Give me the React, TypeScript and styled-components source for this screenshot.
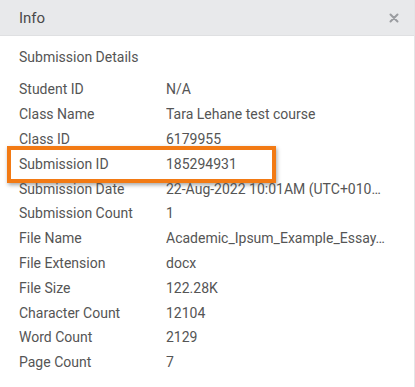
import styled, { createGlobalStyle } from 'styled-components';

const GlobalStyle = createGlobalStyle`
  html, body {
    margin: 0;
    padding: 0;
    background: #ffffff;
  }
  body {
    font-family: Roboto, "Noto Sans", Arial, sans-serif;
  }
`;

const HIGHLIGHT = '#f27a14';

const details: [string, string][] = [
    ['Student ID', 'N/A'],
    ['Class Name', 'Tara Lehane test course'],
    ['Class ID', '6179955'],
    ['Submission ID', '185294931'],
    ['Submission Date', '22-Aug-2022 10:01AM (UTC+0100) Dublin, Edinburgh, Lisbon, London'],
    ['Submission Count', '1'],
    ['File Name', 'Academic_Ipsum_Example_Essay.docx'],
    ['File Extension', 'docx'],
    ['File Size', '122.28K'],
    ['Character Count', '12104'],
    ['Word Count', '2129'],
    ['Page Count', '7'],
];

const Panel = styled.div`
    width: 415px;
    height: 387px;
    background: #fff;
    box-sizing: border-box;
    border-right: 1px solid #e4e5e7;
    overflow: hidden;
`;

const Header = styled.div`
    height: 36px;
    background: #e8e9eb;
    border-bottom: 1px solid #dfe0e2;
    box-sizing: border-box;
    display: flex;
    align-items: center;
    justify-content: space-between;
    padding: 0 19px;
`;

const Title = styled.span`
    color: #4a4a4a;
    font-size: 15px;
`;

const Close = styled.button`
    border: none;
    background: transparent;
    padding: 0;
    margin-right: -4px;
    display: flex;
    align-items: center;
    cursor: pointer;
`;

const Body = styled.div`
    padding: 11px 19px 0;
`;

const Section = styled.div`
    color: #555;
    font-size: 14px;
    line-height: 20px;
    margin-bottom: 10px;
`;

const List = styled.div`
    display: flex;
    flex-direction: column;
`;

const Row = styled.div`
    position: relative;
    display: grid;
    grid-template-columns: 147px 221px;
    height: 24.8px;
    align-items: center;
    font-size: 14px;
    color: #555;
`;

const Label = styled.span`
    white-space: nowrap;
    position: relative;
    z-index: 1;
`;

const Value = styled.span`
    white-space: nowrap;
    overflow: hidden;
    text-overflow: ellipsis;
    position: relative;
    z-index: 1;
`;

const Highlight = styled.div`
    position: absolute;
    left: -12px;
    top: -5px;
    width: 261px;
    height: 29px;
    border: 4px solid ${HIGHLIGHT};
    box-shadow: 1px 2px 4px rgba(0, 0, 0, 0.35);
    background: #fff;
`;

export default function App() {
    return (
        <>
            <GlobalStyle />
            <Panel>
                <Header>
                    <Title>Info</Title>
                    <Close aria-label="Close">
                        <svg width="10" height="10" viewBox="0 0 10 10">
                            <path d="M1.5 1.5 L8.5 8.5 M8.5 1.5 L1.5 8.5" stroke="#9a9ca0" strokeWidth="2" strokeLinecap="round" />
                        </svg>
                    </Close>
                </Header>
                <Body>
                    <Section>Submission Details</Section>
                    <List>
                        {details.map(([label, value]) => (
                            <Row key={label}>
                                {label === 'Submission ID' && <Highlight />}
                                <Label>{label}</Label>
                                <Value>{value}</Value>
                            </Row>
                        ))}
                    </List>
                </Body>
            </Panel>
        </>
    );
}
